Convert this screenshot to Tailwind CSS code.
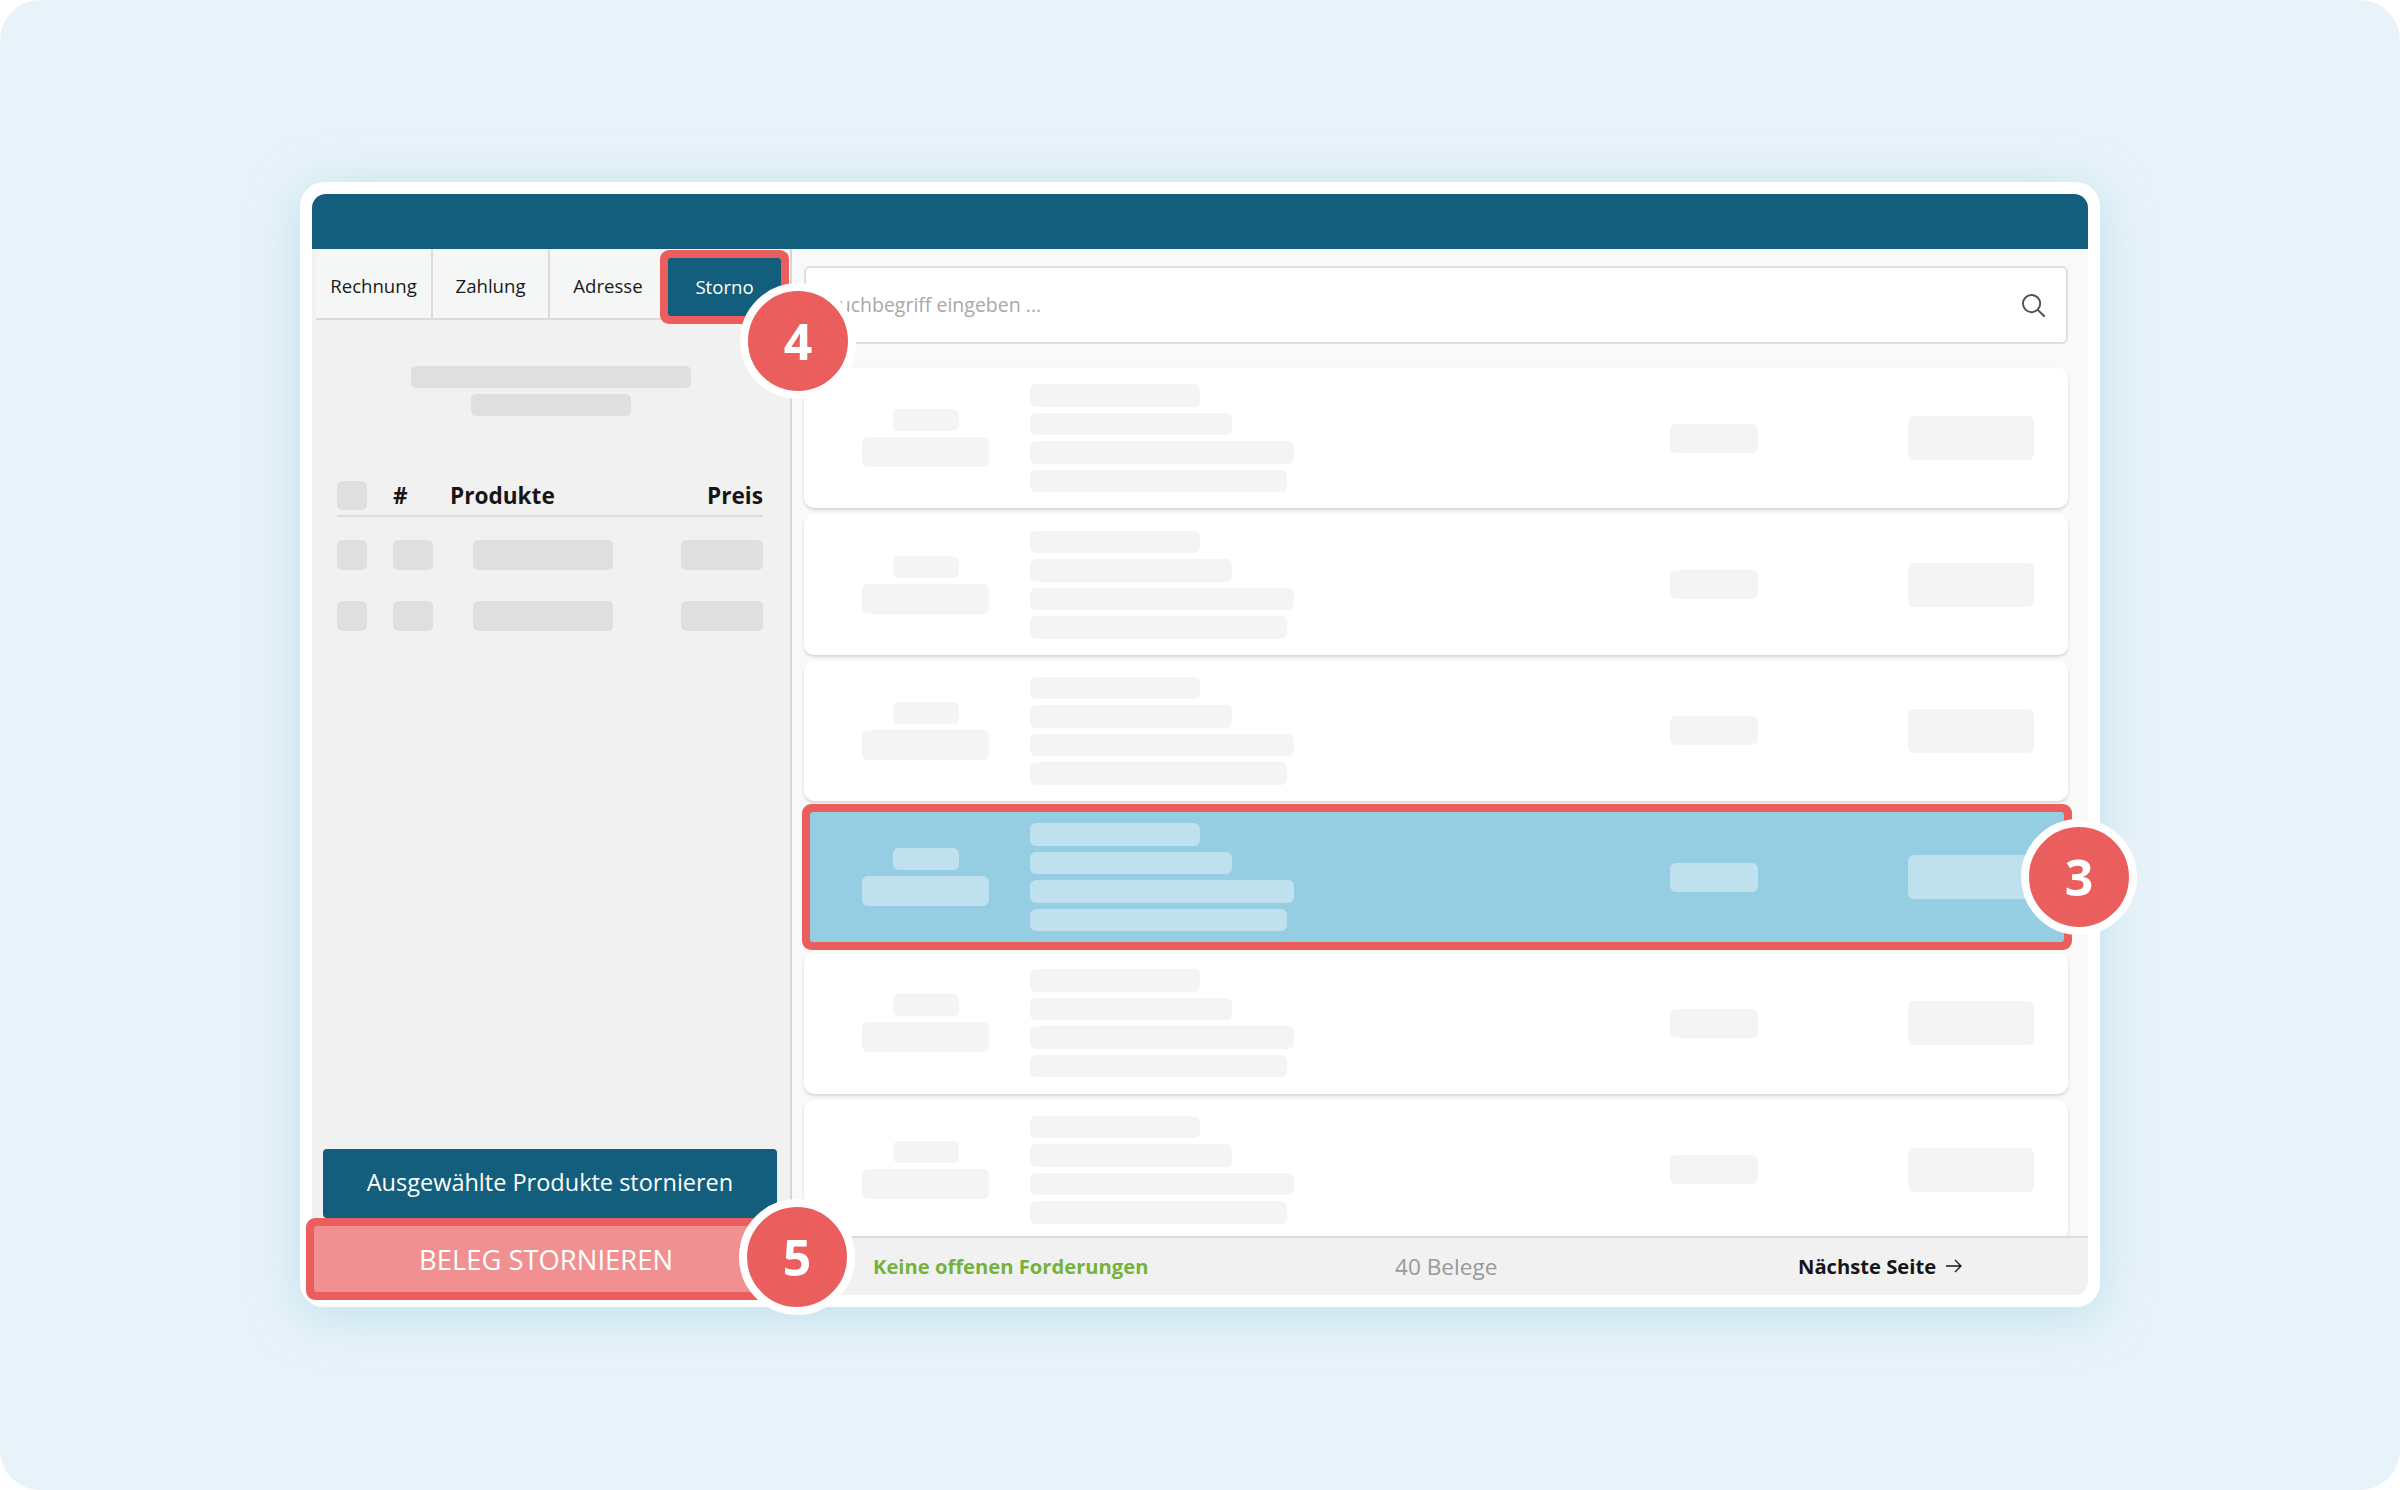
<!DOCTYPE html>
<html>
<head>
  <meta charset="utf-8">
  <script src="https://cdn.jsdelivr.net/npm/@tailwindcss/browser@4"></script>
</head>
<body class="bg-white">
  <div class="w-[2400px] h-[1490px] rounded-[40px] bg-[#e8f3f9] pl-[300px] pt-[182px] font-['Open_Sans',sans-serif] overflow-hidden">
    <div class="relative w-[1800px] h-[1125px] p-[12px] bg-white rounded-[24px] shadow-[0_8px_50px_rgba(150,205,225,0.5)]">
      <div class="h-full flex flex-col">
        <div class="h-[55px] shrink-0 bg-[#135e7c] rounded-t-[14px]"></div>
        <div class="flex flex-1 min-h-0">

          <!-- left panel -->
          <div class="w-[480px] shrink-0 flex flex-col bg-[#f1f1f1] border-r-2 border-[#d6d6d6] rounded-bl-[14px]">
            <div class="flex h-[71px] ml-[4px] shrink-0">
              <div class="w-[117px] pt-[5px] flex items-center justify-center bg-[#f5f6f6] border-b-2 border-r-2 border-[#dcdcdc] text-[18.6px] font-medium text-[#1a1a1a]">Rechnung</div>
              <div class="w-[117px] pt-[5px] flex items-center justify-center bg-[#f5f6f6] border-b-2 border-r-2 border-[#dcdcdc] text-[18.6px] font-medium text-[#1a1a1a]">Zahlung</div>
              <div class="w-[116px] pt-[5px] flex items-center justify-center bg-[#f5f6f6] border-b-2 border-[#dcdcdc] text-[18.6px] font-medium text-[#1a1a1a]">Adresse</div>
              <div class="w-[113px] h-[58px] mt-[9px] ml-[2px] flex items-center justify-center bg-[#135e7c] rounded-[3px] ring-8 ring-[#eb5e5e] text-[18.6px] font-medium text-white">Storno</div>
            </div>
            <div class="flex flex-col items-center gap-[6px] mt-[46px]">
              <div class="w-[280px] h-[22px] rounded-[5px] bg-[#dfdfdf]"></div>
              <div class="w-[160px] h-[22px] rounded-[5px] bg-[#dfdfdf]"></div>
            </div>
            <div class="mx-[25px] mt-[65px] w-[426px]">
              <div class="flex items-center h-[36px] border-b-2 border-[#dcdcdc] pb-[4px] text-[22.6px] font-bold text-[#161616]">
                <div class="w-[30px] h-[29px] mb-[2px] rounded-[5px] bg-[#dfdfdf]"></div>
                <div class="ml-[26px] w-[57px]">#</div>
                <div class="flex-1">Produkte</div>
                <div>Preis</div>
              </div>
              <div class="flex items-center mt-[23px] h-[30px]">
                <div class="w-[30px] h-[30px] rounded-[5px] bg-[#dfdfdf]"></div>
                <div class="ml-[26px] w-[40px] h-[30px] rounded-[5px] bg-[#dfdfdf]"></div>
                <div class="ml-[40px] w-[140px] h-[30px] rounded-[5px] bg-[#dfdfdf]"></div>
                <div class="ml-auto w-[82px] h-[30px] rounded-[5px] bg-[#dfdfdf]"></div>
              </div>
              <div class="flex items-center mt-[31px] h-[30px]">
                <div class="w-[30px] h-[30px] rounded-[5px] bg-[#dfdfdf]"></div>
                <div class="ml-[26px] w-[40px] h-[30px] rounded-[5px] bg-[#dfdfdf]"></div>
                <div class="ml-[40px] w-[140px] h-[30px] rounded-[5px] bg-[#dfdfdf]"></div>
                <div class="ml-auto w-[82px] h-[30px] rounded-[5px] bg-[#dfdfdf]"></div>
              </div>
            </div>
            <div class="mt-auto ml-[11px] w-[454px] h-[69px] pb-[2px] flex items-center justify-center rounded-[4px] bg-[#135e7c] text-white text-[23.5px] font-medium">Ausgewählte Produkte stornieren</div>
            <div class="ml-[2px] mt-[8px] mb-[3px] w-[461px] h-[66px] pt-[2px] pl-[3px] flex items-center justify-center rounded-[3px] bg-[#f09090] ring-8 ring-[#eb5e5e] text-white text-[27.4px] font-medium">BELEG STORNIEREN</div>
          </div>

          <!-- right panel -->
          <div class="flex-1 min-w-0 flex flex-col bg-[#f9f9f9] rounded-br-[14px]">
            <div class="flex-1 min-h-0 overflow-hidden pl-[12px] pr-[20px] pt-[17px]">
              <div class="relative h-[78px] flex items-center pl-[22px] pr-[21px] bg-white border-2 border-[#dedede] rounded-[6px] text-[19.5px] text-[#a8a8a8]">
                Suchbegriff eingeben ...
                <svg class="ml-auto w-[23px] h-[23px] text-[#505050]" viewBox="0 0 24 24" fill="none" stroke="currentColor" stroke-width="2" stroke-linecap="round"><circle cx="10" cy="10" r="9"/><path d="M16.5 16.5l6.5 6.5"/></svg>
              </div>
              <div id="doc-list" class="flex flex-col gap-[6px] mt-[24px]"></div>
            </div>
            <div class="h-[59px] shrink-0 flex items-center bg-[#f1f1f1] border-t-2 border-[#dcdcdc] rounded-br-[14px]">
              <div class="ml-[81px] w-[522px] text-[20.2px] font-bold text-[#76b13d]">Keine offenen Forderungen</div>
              <div class="w-[403px] text-[22.6px] text-[#999999]">40 Belege</div>
              <div class="flex items-center gap-[10px] text-[20.2px] font-bold text-[#161616]">Nächste Seite
                <svg class="w-[16px] h-[16px]" viewBox="0 0 16 16" fill="none" stroke="currentColor" stroke-width="1.3"><path d="M0 8h15M9 2l6 6-6 6"/></svg>
              </div>
            </div>
          </div>
        </div>
      </div>

      <!-- step markers -->
      <div class="absolute z-20 left-[440px] top-[101px] w-[116px] h-[116px] flex items-center justify-center rounded-full bg-[#eb5e5e] border-[8px] border-white text-white text-[50px] font-bold">4</div>
      <div class="absolute z-20 left-[1721px] top-[637px] w-[116px] h-[116px] flex items-center justify-center rounded-full bg-[#eb5e5e] border-[8px] border-white text-white text-[50px] font-bold">3</div>
      <div class="absolute z-20 left-[439px] top-[1017px] w-[116px] h-[116px] flex items-center justify-center rounded-full bg-[#eb5e5e] border-[8px] border-white text-white text-[50px] font-bold">5</div>
    </div>
  </div>

  <script>
    const docListElement = document.getElementById('doc-list');

    function createDocElement(selected) {
      const card = selected
        ? 'relative bg-[#95cde2] rounded-[3px] ring-8 ring-[#eb5e5e] ml-[6px] mr-[4px] my-[5px]'
        : 'bg-white rounded-[10px] shadow-[0_2px_3px_rgba(0,0,0,0.14)]';
      const bar = selected ? 'bg-white/40' : 'bg-[#f4f4f4]';
      const height = selected ? 'h-[130px]' : 'h-[140.4px]';
      const el = document.createElement('div');
      el.className = card + ' ' + height + ' shrink-0 flex items-center';
      el.innerHTML = `
        <div class="${selected ? 'w-[52px]' : 'w-[58px]'} shrink-0"></div>
        <div class="w-[127px] flex flex-col items-center gap-[6px]">
          <div class="w-[66px] h-[22px] rounded-[6px] ${bar}"></div>
          <div class="w-[127px] h-[30px] rounded-[6px] ${bar}"></div>
        </div>
        <div class="ml-[41px] flex flex-col gap-[6px]">
          <div class="w-[170px] h-[22.5px] rounded-[6px] ${bar}"></div>
          <div class="w-[202px] h-[22.5px] rounded-[6px] ${bar}"></div>
          <div class="w-[264px] h-[22.5px] rounded-[6px] ${bar}"></div>
          <div class="w-[257px] h-[22.5px] rounded-[6px] ${bar}"></div>
        </div>
        <div class="ml-[376px] w-[88px] h-[29px] rounded-[6px] ${bar}"></div>
        <div class="ml-[150px] w-[126px] h-[44px] rounded-[6px] ${bar}"></div>
      `;
      return el;
    }

    [0, 0, 0, 1, 0, 0].forEach(function (selected) {
      docListElement.appendChild(createDocElement(selected === 1));
    });
  </script>
</body>
</html>
